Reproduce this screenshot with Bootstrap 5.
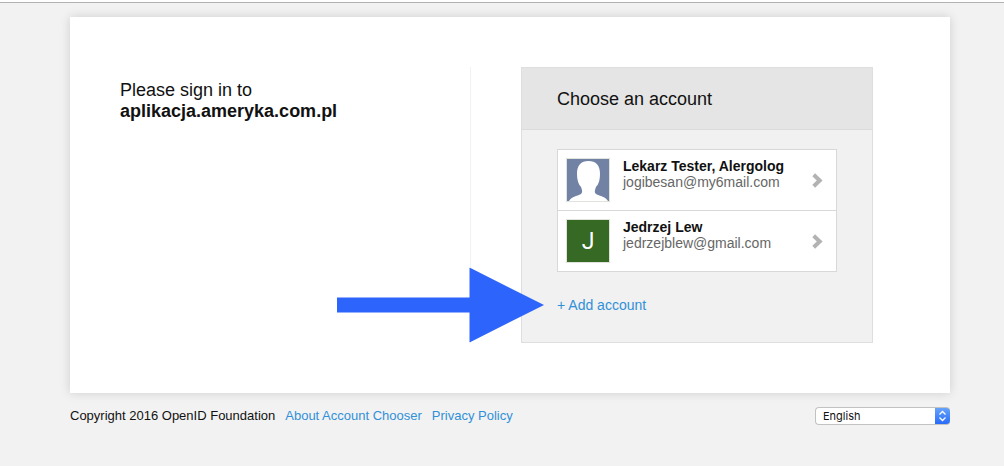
<!DOCTYPE html>
<html lang="en">
<head>
<meta charset="utf-8">
<meta name="viewport" content="width=device-width, initial-scale=1">
<title>Account Chooser</title>
<link href="https://cdn.jsdelivr.net/npm/bootstrap@5.3.0/dist/css/bootstrap.min.css" rel="stylesheet">
<style>
  body { background: #f2f2f2; color: #111; font-family: "Liberation Sans", Arial, sans-serif; font-size: 14px; line-height: 16px; }
  a { color: #3090d8; text-decoration: none; }
  .top-rule { height: 3px; background: #fff; border-bottom: 1px solid #b2b2b2; }
  .page { padding: 14px 54px 0 70px; }
  .sheet { padding: 50px; box-shadow: 0 0 10px rgba(0, 0, 0, .15); }
  .intro { flex: 0 0 45%; border-right: 1px solid #f2f2f2; padding-top: 13px; }
  .intro h1 { font-size: 18px; line-height: 21px; font-weight: 400; }
  .panel { margin: 0 27px 0 50px; background: #f1f1f1; border: 1px solid #dedede; }
  .panel-title { background: #e5e5e5; border-bottom: 1px solid #dcdcdc; padding: 21px 35px 19px; font-size: 18px; line-height: 21px; font-weight: 400; }
  .panel-content { padding: 19px 35px 29px; }
  .accounts .list-group-item { border-color: #d8d8d8; padding: 8px; gap: 13px; height: 61px; color: #111; }
  .accounts .list-group-item:first-child { height: 62px; }
  .avatar { width: 44px; height: 44px; flex: none; border: 1px solid #dfe3dc; }
  .email { color: #666; }
  .chevron { margin: 15px 4px 0 auto; flex: none; }
  .add-row { margin-top: 25px; }
  .pointer { right: 100%; margin-right: 13px; top: 50%; transform: translateY(-50%); pointer-events: none; }
  .footer-bar { margin-top: 14px; font-size: 13px; gap: 10px; }
  .language {
    width: 135px; height: 18px; padding: 0 20px 0 7px; border: 1px solid #c2c2c2; border-right: 0; border-radius: 4px; appearance: none;
    font: 11px/16px Inter, sans-serif; color: #111;
    background: #fff url("data:image/svg+xml,%3Csvg xmlns='http://www.w3.org/2000/svg' width='15' height='18'%3E%3Cdefs%3E%3ClinearGradient id='g' x2='0' y2='1'%3E%3Cstop stop-color='%236aa6fa'/%3E%3Cstop offset='1' stop-color='%232468f8'/%3E%3C/linearGradient%3E%3C/defs%3E%3Crect width='15' height='18' fill='url(%23g)'/%3E%3Cpath d='M4.5 7.5l3-3 3 3M4.5 10.5l3 3 3-3' fill='none' stroke='%23fff' stroke-width='1.3'/%3E%3C/svg%3E") right center / 15px 18px no-repeat border-box;
  }
</style>
</head>
<body>
<div class="top-rule"></div>
<div class="page">
  <main class="sheet bg-white d-flex">
    <section class="intro">
      <h1 class="m-0">Please sign in to<br><strong>aplikacja.ameryka.com.pl</strong></h1>
    </section>
    <section class="panel flex-grow-1">
      <h2 class="panel-title m-0">Choose an account</h2>
      <div class="panel-content">
        <div class="accounts list-group rounded-0">
          <a href="#" class="list-group-item list-group-item-action d-flex">
            <svg class="avatar" viewBox="0 0 42 42" aria-hidden="true"><rect width="42" height="42" fill="#7182a5"/><path d="M2 42c2-4 8-5 12-7 2-2 1-4 0-7-3-3-4-8-4-13C10 6 14 2 21.500 2S33 6 33 15c0 5-1 10-4 13-1 3-2 5 0 7 4 2 10 3 12 7z" fill="#fff"/></svg>
            <span><strong class="d-block">Lekarz Tester, Alergolog</strong><span class="email">jogibesan@my6mail.com</span></span>
            <svg class="chevron" width="12" height="15" viewBox="0 0 12 15" aria-hidden="true"><path d="M1.700 1.700l6 5.800-6 5.800" fill="none" stroke="#b3b3b3" stroke-width="4"/></svg>
          </a>
          <a href="#" class="list-group-item list-group-item-action d-flex">
            <svg class="avatar" viewBox="0 0 42 42" aria-hidden="true"><rect width="42" height="42" fill="#356924"/><text x="21" y="29" text-anchor="middle" font-family="Roboto, sans-serif" font-size="23" fill="#fff">J</text></svg>
            <span><strong class="d-block">Jedrzej Lew</strong><span class="email">jedrzejblew@gmail.com</span></span>
            <svg class="chevron" width="12" height="15" viewBox="0 0 12 15" aria-hidden="true"><path d="M1.700 1.700l6 5.800-6 5.800" fill="none" stroke="#b3b3b3" stroke-width="4"/></svg>
          </a>
        </div>
        <div class="add-row position-relative">
          <svg class="pointer position-absolute" width="207" height="75" viewBox="0 0 207 75" aria-hidden="true"><path d="M0 30h132.500V0L207 37.500 132.500 75V45H0z" fill="#2c64fc"/></svg>
          <a href="#">+ Add account</a>
        </div>
      </div>
    </section>
  </main>
  <footer class="footer-bar d-flex align-items-center">
    <span>Copyright 2016 OpenID Foundation</span>
    <a href="#">About Account Chooser</a>
    <a href="#">Privacy Policy</a>
    <select class="language ms-auto" aria-label="Language"><option>English</option></select>
  </footer>
</div>
<script src="https://cdn.jsdelivr.net/npm/bootstrap@5.3.0/dist/js/bootstrap.bundle.min.js"></script>
</body>
</html>
